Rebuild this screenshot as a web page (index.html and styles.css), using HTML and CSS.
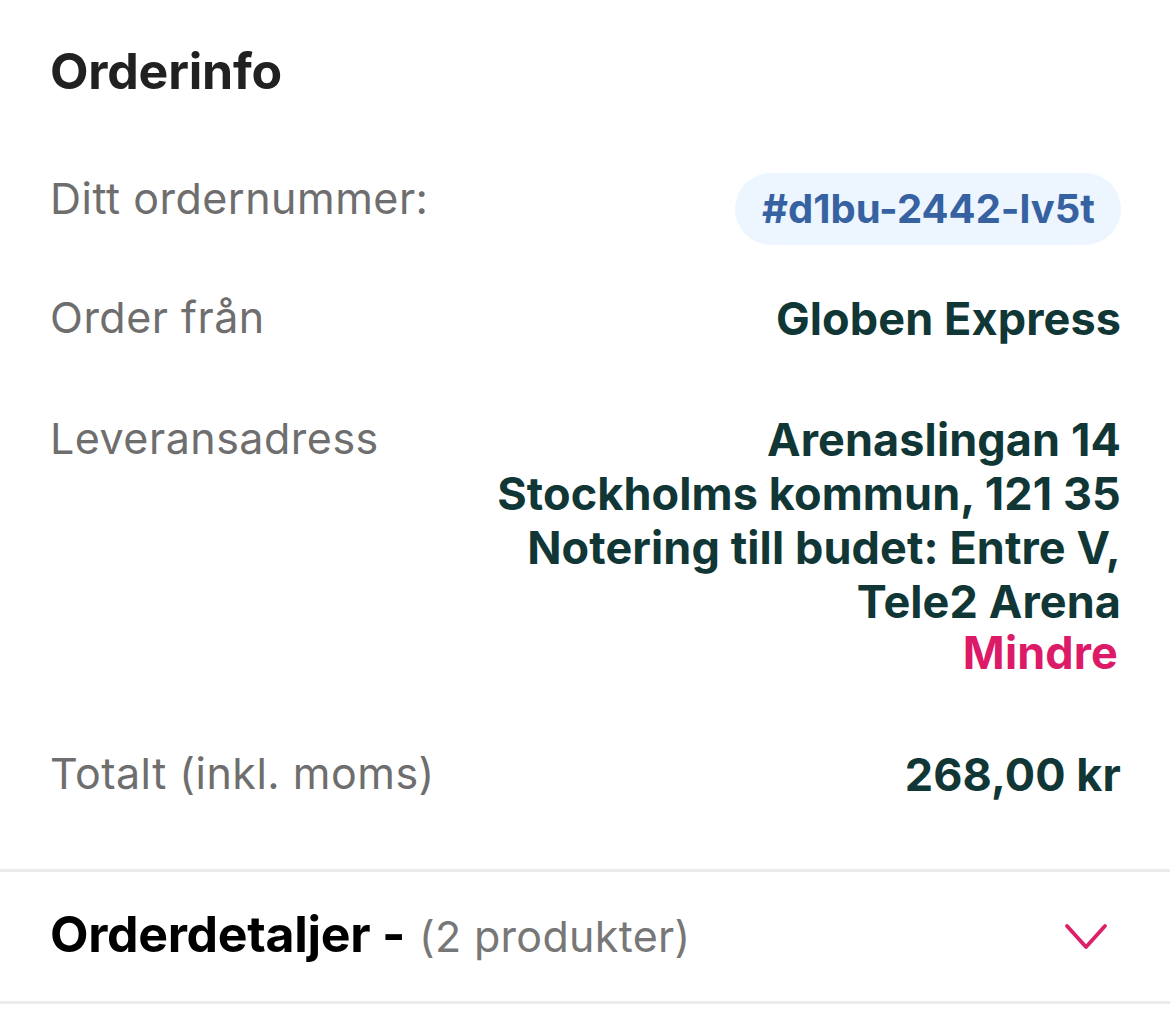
FILE: index.html
```html
<!DOCTYPE html>
<html lang="sv">
<head>
<meta charset="utf-8">
<link rel="stylesheet" href="styles.css">
</head>
<body>
<section class="info">
  <h1 class="title">Orderinfo</h1>
  <div class="row row-order">
    <div class="label">Ditt ordernummer:</div>
    <div class="badge">#d1bu-2442-lv5t</div>
  </div>
  <div class="row">
    <div class="label">Order från</div>
    <div class="value">Globen Express</div>
  </div>
  <div class="row row-address">
    <div class="label">Leveransadress</div>
    <div class="value address">
      <div>Arenaslingan 14</div>
      <div>Stockholms kommun, 121 35</div>
      <div>Notering till budet: Entre V,</div>
      <div>Tele2 Arena</div>
      <div class="less">Mindre</div>
    </div>
  </div>
  <div class="row row-total">
    <div class="label">Totalt (inkl. moms)</div>
    <div class="value">268,00 kr</div>
  </div>
</section>
<section class="details">
  <div class="details-title"><strong>Orderdetaljer -</strong> <span class="count">(2 produkter)</span></div>
  <svg class="chevron" width="44" height="28" viewBox="0 0 44 28"><path d="M3 3 L22 24 L41 3" fill="none" stroke="#dd1f68" stroke-width="3.8" stroke-linecap="round" stroke-linejoin="round"/></svg>
</section>
</body>
</html>
```
FILE: styles.css
```css
* { box-sizing: border-box; }
html, body { margin: 0; padding: 0; background: #fff; }
body {
  font-family: Inter, "Noto Sans", sans-serif;
  width: 1170px;
  height: 1009px;
  overflow: hidden;
}
.info {
  padding: 41px 49px 67px 50px;
}
.title {
  margin: 0 0 70px;
  font-size: 50px;
  font-weight: 700;
  color: #212121;
  line-height: 60px;
  letter-spacing: -0.2px;
}
.row {
  display: flex;
  justify-content: space-between;
  align-items: flex-start;
  margin-bottom: 67px;
}
.row-order { margin-bottom: 47px; }
.row-address { margin-bottom: 71px; }
.row-total { margin-bottom: 0; }
.label {
  font-size: 43px;
  color: #6e6e6e;
  line-height: 54px;
  letter-spacing: 0.5px;
  margin-top: -2px;
}
.row-order .label { margin-top: 0; }
.value {
  font-size: 45px;
  font-weight: 700;
  color: #103736;
  line-height: 54px;
  text-align: right;
  letter-spacing: 0.1px;
}
.badge {
  background: #edf5fe;
  color: #3762a2;
  font-size: 40px;
  font-weight: 700;
  border-radius: 36px;
  height: 72px;
  line-height: 72px;
  padding: 0 26px 0 27px;
  margin-top: 2px;
}
.address .less {
  color: #dc1a68;
  margin-right: 3px;
  line-height: 48px;
}
.details {
  border-top: 3px solid #ebebeb;
  border-bottom: 3px solid #ebebeb;
  display: flex;
  align-items: center;
  justify-content: space-between;
  padding: 0 62px 0 50px;
  height: 135px;
  background: #fff;
}
.details-title {
  font-size: 50px;
  line-height: 60px;
  color: #000;
  margin-top: -4px;
}
.details-title strong { font-weight: 700; letter-spacing: -0.3px; }
.count { color: #777; font-size: 43px; font-weight: 400; letter-spacing: 0.3px; }
.chevron { display: block; margin-top: 1px; }
```
